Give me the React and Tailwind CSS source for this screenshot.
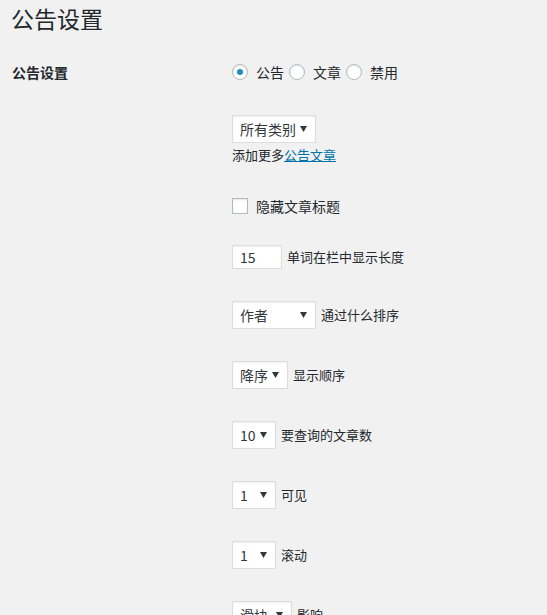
import React from 'react';

const font = { fontFamily: '"Noto Sans CJK SC", "Noto Sans", sans-serif' };

const Arrow = () => (
  <svg width="7" height="6" viewBox="0 0 7 6" className="shrink-0">
    <path d="M0 0 L7 0 L3.5 6 Z" fill="#32373c" />
  </svg>
);

const Select = ({ value, width }) => (
  <div
    className="h-[28px] bg-white border border-[#dddddd] shadow-[inset_0_1px_2px_rgba(0,0,0,0.07)] flex items-center justify-between pl-[7px] pr-[8px] text-[14px] text-[#32373c]"
    style={{ width }}
  >
    <span>{value}</span>
    <Arrow />
  </div>
);

const SelectRow = ({ value, width, label }) => (
  <div className="mt-[32px] flex items-center gap-[5px]">
    <Select value={value} width={width} />
    <span className="text-[13px] text-[#23282d]">{label}</span>
  </div>
);

const Radio = ({ checked, label }) => (
  <label className="flex items-center">
    <span className="w-[16px] h-[16px] rounded-full bg-white border border-[#b4b9be] shadow-[inset_0_1px_2px_rgba(0,0,0,0.1)] flex items-center justify-center">
      {checked && <span className="w-[6px] h-[6px] rounded-full bg-[#1e8cbe]" />}
    </span>
    <span className="ml-[8px] text-[14px] text-[#23282d]">{label}</span>
  </label>
);

export default function App() {
  return (
    <div className="min-h-screen bg-[#f1f1f1] text-[#23282d] overflow-hidden" style={font}>
      <h1 className="pt-[4px] pl-[11px] text-[23px] leading-[29px] font-normal">公告设置</h1>
      <div className="flex mt-[29px]">
        <div className="w-[232px] shrink-0 pl-[12px] text-[14px] font-bold leading-[20px]">公告设置</div>
        <div className="flex flex-col items-start">
          <div className="h-[20px] flex items-center gap-[5px]">
            <Radio checked label="公告" />
            <Radio label="文章" />
            <Radio label="禁用" />
          </div>

          <div className="mt-[33px]">
            <Select value="所有类别" width={84} />
          </div>
          <p className="mt-[3px] text-[13px] leading-[18px]">
            添加更多<a className="text-[#0073aa] underline">公告文章</a>
          </p>

          <div className="mt-[34px] h-[16px] flex items-center">
            <span className="w-[16px] h-[16px] bg-white border border-[#b4b9be] shadow-[inset_0_1px_2px_rgba(0,0,0,0.1)]" />
            <span className="ml-[8px] text-[14px]">隐藏文章标题</span>
          </div>

          <div className="mt-[31px] flex items-center gap-[5px]">
            <div className="w-[50px] h-[24px] bg-white border border-[#dddddd] shadow-[inset_0_1px_2px_rgba(0,0,0,0.07)] pl-[7px] text-[14px] leading-[22px] text-[#32373c]">
              15
            </div>
            <span className="text-[13px]">单词在栏中显示长度</span>
          </div>

          <SelectRow value="作者" width={84} label="通过什么排序" />
          <SelectRow value="降序" width={56} label="显示顺序" />
          <SelectRow value="10" width={44} label="要查询的文章数" />
          <SelectRow value="1" width={44} label="可见" />
          <SelectRow value="1" width={44} label="滚动" />
          <SelectRow value="滑块" width={60} label="影响" />
        </div>
      </div>
    </div>
  );
}
